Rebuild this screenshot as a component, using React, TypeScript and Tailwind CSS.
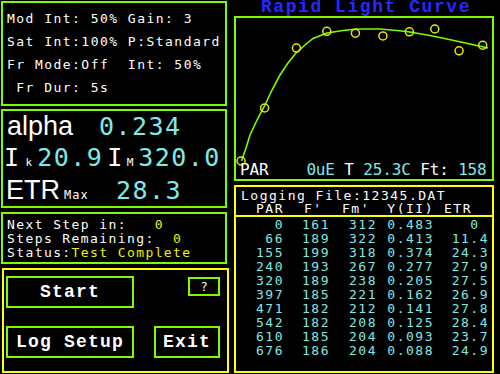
import React from "react";

const rows: [string, string, string, string, string][] = [
  ["0", "161", "312", "0.483", "0 "],
  ["66", "189", "322", "0.413", "11.4"],
  ["155", "199", "318", "0.374", "24.3"],
  ["240", "193", "267", "0.277", "27.9"],
  ["320", "189", "238", "0.205", "27.5"],
  ["397", "185", "221", "0.162", "26.9"],
  ["471", "182", "212", "0.141", "27.8"],
  ["542", "182", "208", "0.125", "28.4"],
  ["610", "185", "204", "0.093", "23.7"],
  ["676", "186", "204", "0.088", "24.9"],
];

const pts: [number, number][] = [
  [0, 0],
  [66, 11.4],
  [155, 24.3],
  [240, 27.9],
  [320, 27.5],
  [397, 26.9],
  [471, 27.8],
  [542, 28.4],
  [610, 23.7],
  [676, 24.9],
];

const curve =
  "241.5,161 246,148 250,135 258,118 265,105 272,90 280,75 288,63 296,53 305,45 313,38.5 327,33 343,30.5 357,29 380,29 397,30.5 410,32 430,35.5 447,39 463,42.5 488,48";

function Chart() {
  return (
    <svg
      className="absolute -left-[2px] -top-[2px]"
      width={260}
      height={165}
      viewBox="234 16 260 165"
    >
      <polyline points={curve} fill="none" stroke="#7cfc00" strokeWidth={1.6} />
      {pts.map(([p, e], i) => (
        <circle
          key={i}
          cx={241 + p * 0.3575}
          cy={161 - e * 4.648}
          r={4}
          fill="none"
          stroke="#e8e800"
          strokeWidth={1.5}
        />
      ))}
    </svg>
  );
}

export default function App() {
  return (
    <div className="w-[500px] h-[374px] bg-black flex overflow-hidden">
      {/* Left column */}
      <div className="flex flex-col w-[229px] pt-[1px] pl-[1px]">
        {/* Panel 1 */}
        <div className="h-[105px] w-[226px] border-2 border-[#7cfc00] pt-[4px] pl-[4px] text-white font-['DejaVu_Sans_Mono',monospace] text-[13px] leading-[23px] tracking-[1.47px] whitespace-pre">
          <div>Mod Int: 50% Gain: 3</div>
          <div>Sat Int:100% P:Standard</div>
          <div>Fr Mode:Off  Int: 50%</div>
          <div> Fr Dur: 5s</div>
        </div>

        {/* Panel 2 */}
        <div className="mt-[3px] h-[99px] w-[226px] border-2 border-[#7cfc00] pt-[2px] text-white">
          <div className="flex items-baseline h-[32px] pl-[4px]">
            <span className="w-[92px] font-['Liberation_Sans',sans-serif] text-[27px] leading-none">alpha</span>
            <span className="font-['DejaVu_Sans_Mono',monospace] text-[25px] leading-none tracking-[1.45px] text-[#80e8e8]">0.234</span>
          </div>
          <div className="flex items-baseline h-[32px] pl-[1px]">
            <span className="font-['DejaVu_Sans_Mono',monospace] text-[25px] leading-none tracking-[1.45px]">I</span>
            <span className="ml-[5px] font-['DejaVu_Sans_Mono',monospace] text-[11px] leading-none">k</span>
            <span className="ml-[5px] font-['DejaVu_Sans_Mono',monospace] text-[25px] leading-none tracking-[1.45px] text-[#80e8e8]">20.9</span>
            <span className="ml-[4px] font-['DejaVu_Sans_Mono',monospace] text-[25px] leading-none tracking-[1.45px]">I</span>
            <span className="ml-[3px] font-['DejaVu_Sans_Mono',monospace] text-[11px] leading-none">M</span>
            <span className="ml-[5px] font-['DejaVu_Sans_Mono',monospace] text-[25px] leading-none tracking-[1.45px] text-[#80e8e8]">320.0</span>
          </div>
          <div className="flex items-baseline h-[32px] pl-[3px]">
            <span className="font-['Liberation_Sans',sans-serif] text-[27px] leading-none">ETR</span>
            <span className="ml-[4px] w-[52px] font-['DejaVu_Sans_Mono',monospace] text-[12px] leading-none tracking-[1px]">Max</span>
            <span className="font-['DejaVu_Sans_Mono',monospace] text-[25px] leading-none tracking-[1.45px] text-[#80e8e8]">28.3</span>
          </div>
        </div>

        {/* Panel 3 */}
        <div className="mt-[4px] h-[52px] w-[226px] border-2 border-[#7cfc00] pt-[4px] pl-[4px] text-white font-['DejaVu_Sans_Mono',monospace] text-[13px] leading-[14px] tracking-[1.4px] whitespace-pre">
          <div>
            Next Step in:   <span className="text-[#f0f000]">0</span>
          </div>
          <div>
            Steps Remaining:  <span className="text-[#f0f000]">0</span>
          </div>
          <div>
            Status:<span className="text-[#f0f000]">Test Complete</span>
          </div>
        </div>

        {/* Panel 4 */}
        <div className="mt-[4px] ml-[1px] h-[105px] w-[227px] border-2 border-[#ffff00] pt-[6px] pl-[2px] text-white font-['Liberation_Mono',monospace] font-bold text-[18px] tracking-[1.2px]">
          <div className="flex items-start">
            <div className="w-[128px] h-[32px] border-2 border-[#7cfc00] flex items-center justify-center">Start</div>
            <div className="ml-[54px] mt-[1px] w-[32px] h-[19px] border-2 border-[#7cfc00] flex items-center justify-center font-['DejaVu_Sans_Mono',monospace] font-normal text-[12px] tracking-normal">?</div>
          </div>
          <div className="flex mt-[18px]">
            <div className="w-[128px] h-[32px] border-2 border-[#7cfc00] flex items-center justify-center">Log Setup</div>
            <div className="ml-[20px] w-[66px] h-[32px] border-2 border-[#7cfc00] flex items-center justify-center">Exit</div>
          </div>
        </div>
      </div>

      {/* Right column */}
      <div className="ml-[5px] w-[260px] flex flex-col">
        <div className="h-[16px] text-center font-['Liberation_Mono',monospace] font-bold text-[18px] leading-[14px] tracking-[1.55px] text-[#2828ff] pl-[4px]">
          Rapid Light Curve
        </div>
        <div className="relative h-[165px] border-2 border-[#7cfc00] flex flex-col justify-end pb-[1.5px] pl-[4px]">
          <Chart />
          <div className="relative font-['DejaVu_Sans_Mono',monospace] text-[16px] leading-[16px] tracking-[-0.15px] whitespace-pre text-white">
            PAR    <span className="text-[#80e8e8]">0uE</span> T <span className="text-[#80e8e8]">25.3C</span> Ft: <span className="text-[#80e8e8]">158</span>
          </div>
        </div>
        <div className="mt-[4px] h-[188px] border-2 border-[#ffff00] font-['DejaVu_Sans_Mono',monospace] text-[13px] tracking-[1.5px] whitespace-pre">
          <div className="pl-[5px] pt-[1.5px] text-white leading-[13px]">
            <div>Logging File:12345.DAT</div>
            <div className="grid grid-cols-[43px_46px_47px_57px_55px]">
              <div className="text-right">PAR</div>
              <div className="pl-[20px]">F'</div>
              <div className="pl-[12px]">Fm'</div>
              <div className="text-right">Y(II)</div>
              <div className="pl-[10px]">ETR</div>
            </div>
          </div>
          <div className="mt-[0.5px] h-[2px] bg-[#ffff00]" />
          <div className="pl-[5px] pt-[1px] text-[#80e8e8] leading-[14px]">
            {rows.map((r, i) => (
              <div key={i} className="grid grid-cols-[43px_46px_47px_57px_55px]">
                {r.map((c, j) => (
                  <div key={j} className="text-right">
                    {c}
                  </div>
                ))}
              </div>
            ))}
          </div>
        </div>
      </div>
    </div>
  );
}
